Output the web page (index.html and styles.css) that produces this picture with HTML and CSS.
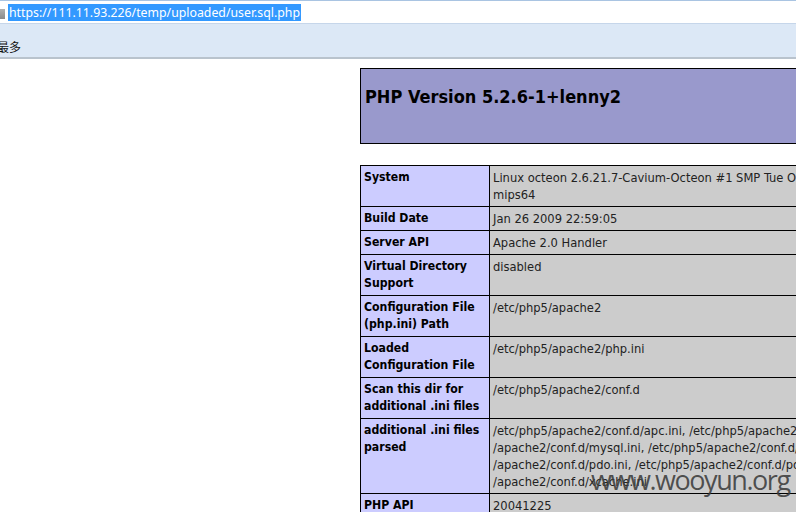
FILE: index.html
```html
<!DOCTYPE html>
<html>
<head>
<meta charset="utf-8">
<link rel="stylesheet" href="styles.css">
</head>
<body>
<div class="addr">
  <span class="page-icon"></span>
  <span class="url">https://111.11.93.226/temp/uploaded/user.sql.php</span>
</div>
<div class="favbar"><span class="fav">最多</span></div>
<main class="page">
  <table class="head">
    <tr><td><h1>PHP Version 5.2.6-1+lenny2</h1></td></tr>
  </table>
  <table class="info">
    <colgroup><col class="c1"><col class="c2"></colgroup>
    <tr><td class="e">System</td><td class="v">Linux octeon 2.6.21.7-Cavium-Octeon #1 SMP Tue Oct 21 18:45:14 CST 2008<br>mips64</td></tr>
    <tr><td class="e">Build Date</td><td class="v">Jan 26 2009 22:59:05</td></tr>
    <tr><td class="e">Server API</td><td class="v">Apache 2.0 Handler</td></tr>
    <tr><td class="e">Virtual Directory Support</td><td class="v">disabled</td></tr>
    <tr><td class="e">Configuration File (php.ini) Path</td><td class="v">/etc/php5/apache2</td></tr>
    <tr><td class="e">Loaded Configuration File</td><td class="v">/etc/php5/apache2/php.ini</td></tr>
    <tr><td class="e">Scan this dir for additional .ini files</td><td class="v">/etc/php5/apache2/conf.d</td></tr>
    <tr><td class="e">additional .ini files parsed</td><td class="v">/etc/php5/apache2/conf.d/apc.ini, /etc/php5/apache2/conf.d/gd.ini, /etc/php5<br>/apache2/conf.d/mysql.ini, /etc/php5/apache2/conf.d/mysqli.ini, /etc/php5<br>/apache2/conf.d/pdo.ini, /etc/php5/apache2/conf.d/pdo_mysql.ini, /etc/php5<br>/apache2/conf.d/xcache.ini</td></tr>
    <tr><td class="e">PHP API</td><td class="v">20041225</td></tr>
  </table>
</main>
<div class="watermark">www.wooyun.org</div>
</body>
</html>
```
FILE: styles.css
```css
html, body {
  margin: 0;
  padding: 0;
  overflow: hidden;
  background: #ffffff;
  height: 512px;
  width: 796px;
}
body {
  position: relative;
  font-family: "DejaVu Sans Condensed", "DejaVu Sans", sans-serif;
  font-stretch: condensed;
}
.addr {
  height: 22px;
  border-top: 1px solid #a9c4e2;
  border-bottom: 1px solid #c6d6ea;
  display: flex;
  align-items: center;
  background: #fff;
}
.page-icon {
  width: 5px;
  height: 10px;
  background: linear-gradient(#b0b0b0, #8a8a8a);
  margin-right: 3px;
  margin-top: 4px;
}
.url {
  background: #3399ff;
  color: #fff;
  font-family: "Noto Sans", sans-serif;
  font-stretch: normal;
  font-size: 12.3px;
  line-height: 17px;
  padding: 0 1px;
}
.favbar {
  height: 35px;
  background: #dce8f6;
  border-bottom: 2px solid #b9c3cd;
  display: flex;
  align-items: flex-end;
  padding-bottom: 2px;
  box-sizing: border-box;
}
.fav {
  font-family: "Noto Sans CJK SC", sans-serif;
  font-size: 12px;
  line-height: 16px;
  color: #111;
  margin-left: -3px;
}
.page {
  padding: 9px 0 0 360px;
}
table {
  border-collapse: collapse;
}
.head {
  width: 700px;
  background: #9999cc;
  border: 1px solid #000;
}
.head td {
  height: 74px;
  padding: 0 4px;
  vertical-align: top;
}
.head h1 {
  margin: 16px 0 0;
  font-size: 18px;
  font-weight: bold;
  line-height: 24px;
  color: #000;
}
.info {
  margin-top: 21px;
  width: 700px;
  table-layout: fixed;
}
.c1 { width: 129px; }
.c2 { width: 571px; }
.info td {
  border: 1px solid #000;
  padding: 3px 3px;
  font-size: 12.8px;
  line-height: 17px;
  vertical-align: top;
  color: #000;
}
.info .e {
  background: #ccccff;
  font-weight: bold;
  font-size: 12.2px;
}
.info .v {
  background: #cccccc;
  white-space: nowrap;
  overflow: hidden;
  color: #222;
}
.watermark {
  position: absolute;
  left: 591px;
  top: 460px;
  font-family: "Open Sans", sans-serif;
  font-stretch: normal;
  font-size: 27px;
  line-height: 40px;
  color: rgba(60, 60, 60, 0.88);
  letter-spacing: -1.45px;
}
```
